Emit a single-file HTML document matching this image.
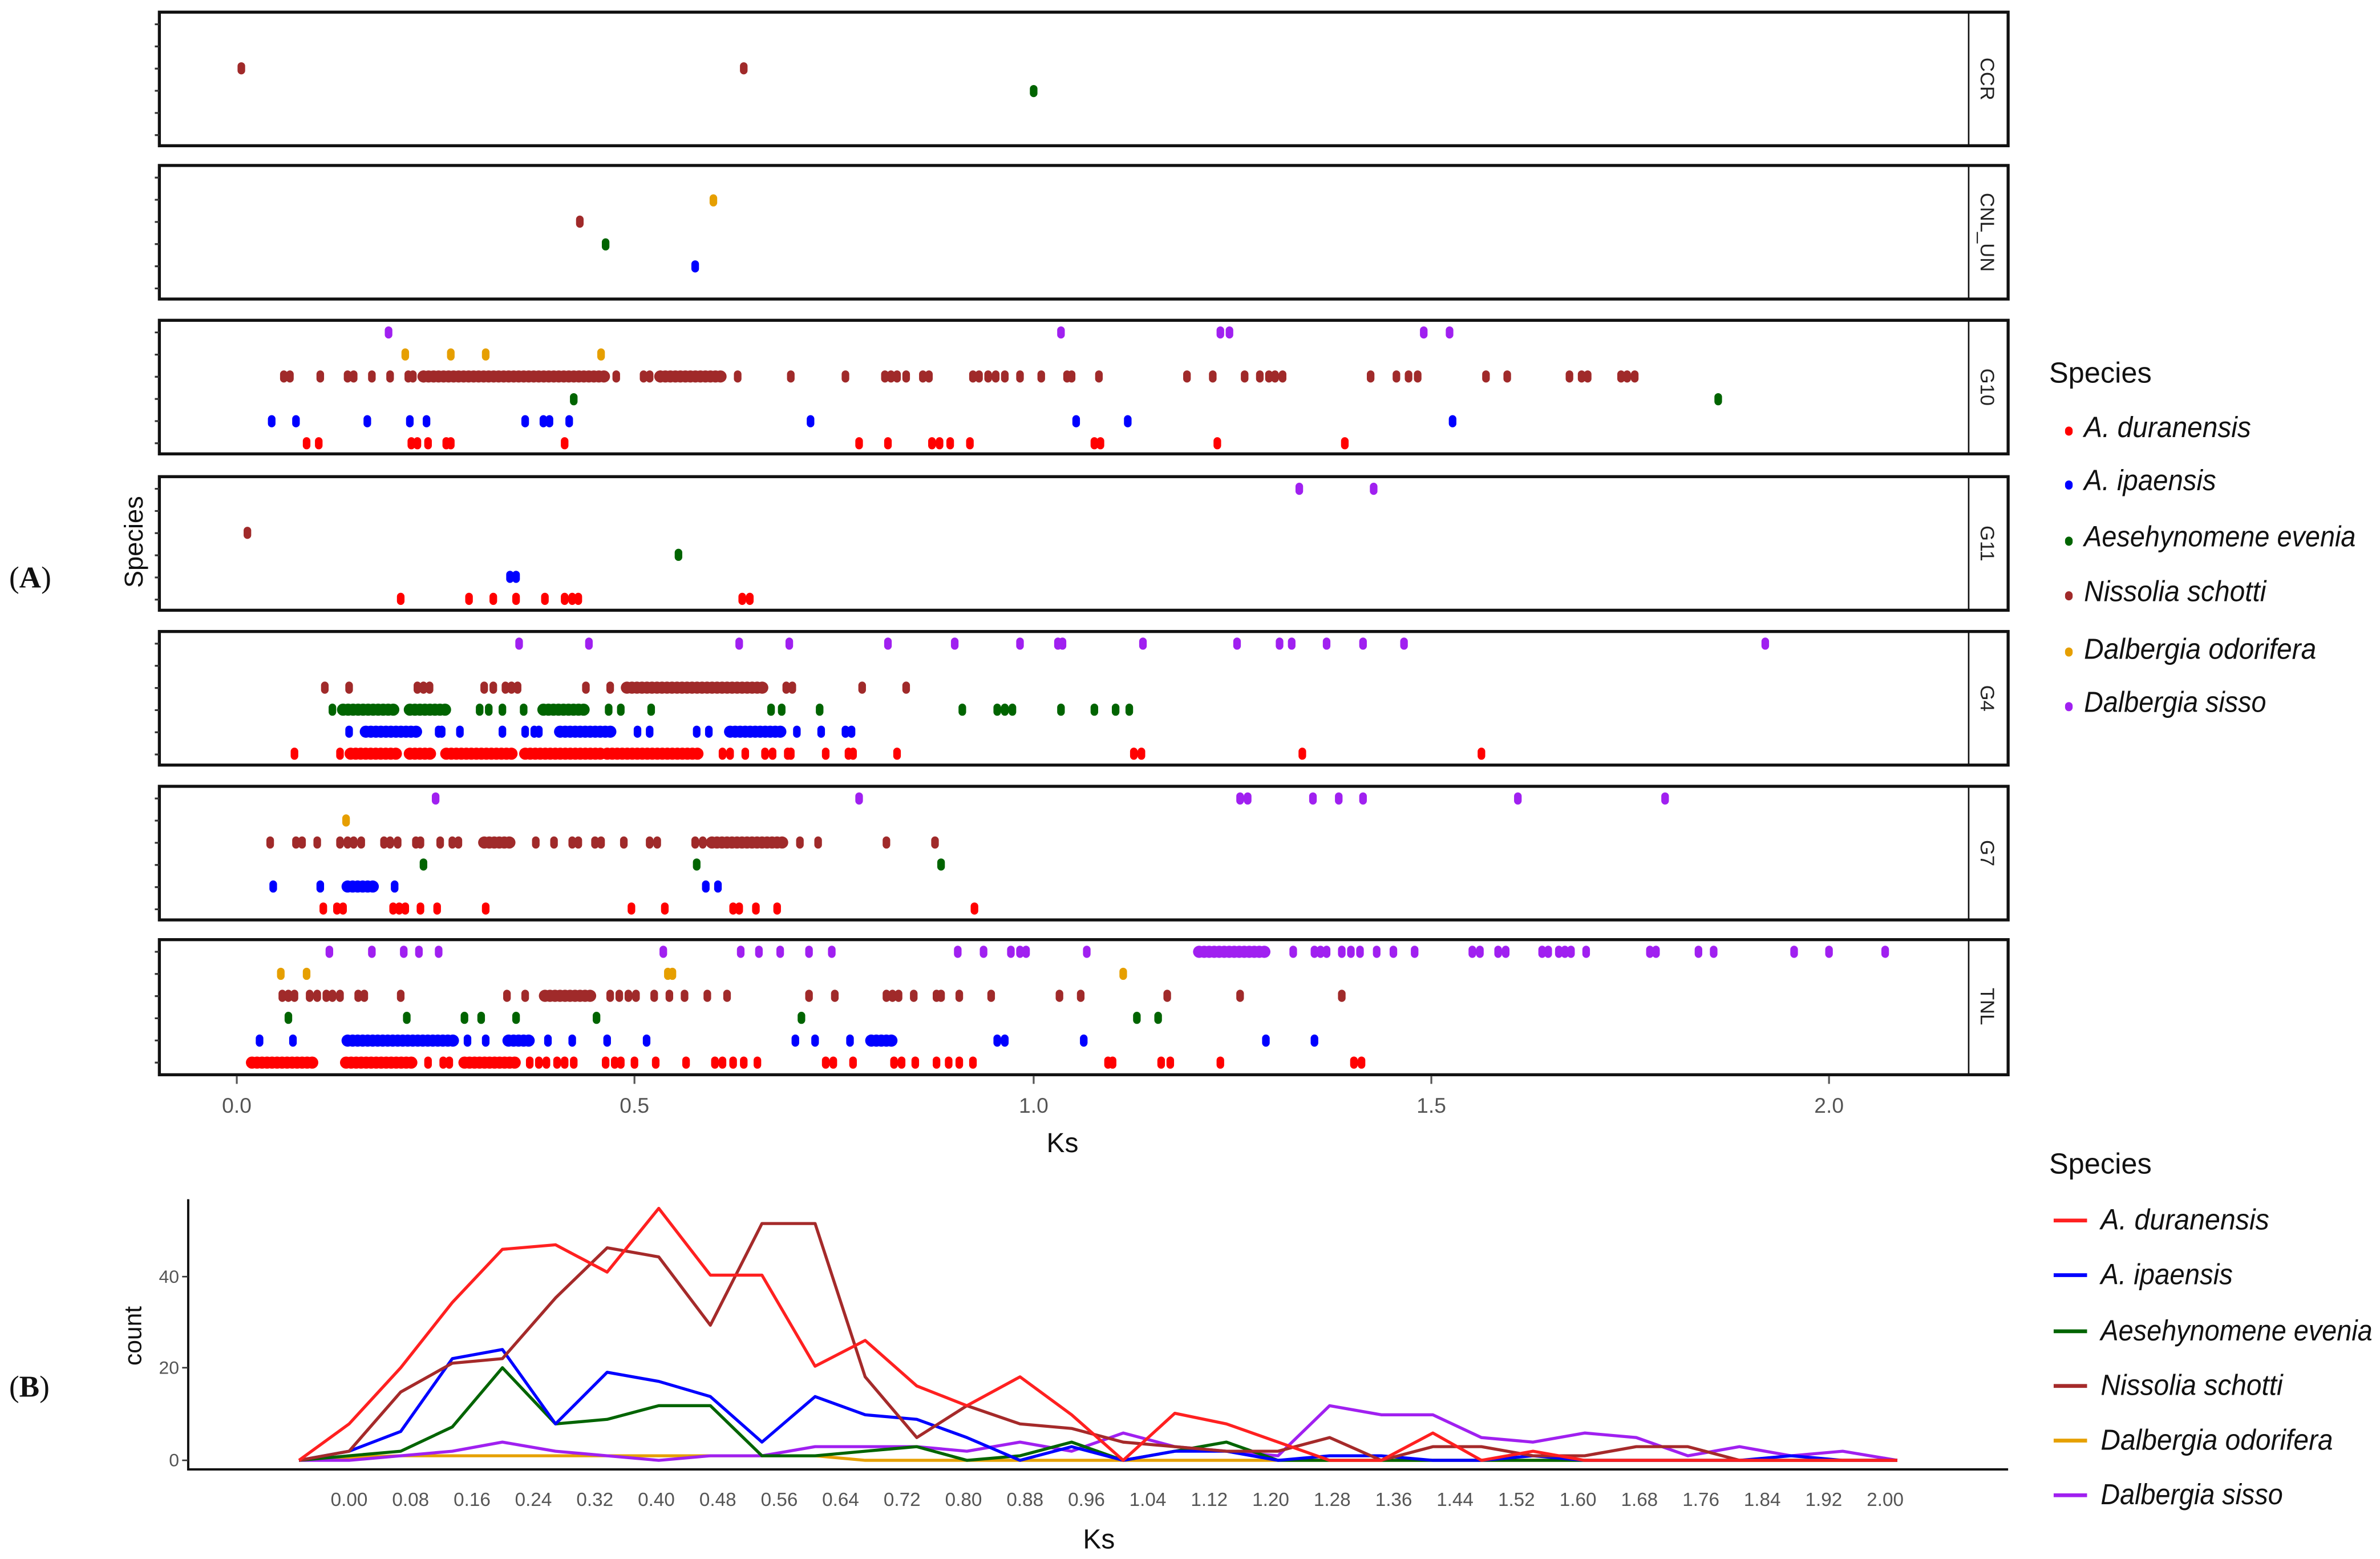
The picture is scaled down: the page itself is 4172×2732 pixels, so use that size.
<!DOCTYPE html>
<html><head><meta charset="utf-8"><style>
html,body{margin:0;padding:0;background:#fff;}
svg{display:block;}
text{font-family:"Liberation Sans",sans-serif;}
</style></head><body>
<svg width="4172" height="2732" viewBox="0 0 1568 1027" preserveAspectRatio="none" xmlns="http://www.w3.org/2000/svg">
<rect width="1568" height="1027" fill="#fff"/>
<g fill="none" stroke="#111" stroke-width="2">
<rect x="105" y="8" width="1218" height="88"/>
<rect x="105" y="109" width="1218" height="88"/>
<rect x="105" y="211" width="1218" height="88"/>
<rect x="105" y="314" width="1218" height="88"/>
<rect x="105" y="416" width="1218" height="88"/>
<rect x="105" y="518" width="1218" height="88"/>
<rect x="105" y="619" width="1218" height="89"/>
</g>
<g stroke="#111" stroke-width="1">
<path d="M1297 8v88M1297 109v88M1297 211v88M1297 314v88M1297 416v88M1297 518v88M1297 619v89"/>
</g>
<g stroke="#333" stroke-width="1.2">
<path d="M102 16h3M102 30.6h3M102 45.2h3M102 59.8h3M102 74.4h3M102 89h3
M102 117h3M102 131.6h3M102 146.2h3M102 160.8h3M102 175.4h3M102 190h3
M102 219h3M102 233.6h3M102 248.2h3M102 262.8h3M102 277.4h3M102 292h3
M102 322h3M102 336.6h3M102 351.2h3M102 365.8h3M102 380.4h3M102 395h3
M102 424h3M102 438.6h3M102 453.2h3M102 467.8h3M102 482.4h3M102 497h3
M102 526h3M102 540.6h3M102 555.2h3M102 569.8h3M102 584.4h3M102 599h3
M102 627h3M102 641.6h3M102 656.2h3M102 670.8h3M102 685.4h3M102 700h3"/>
<path d="M156 709v5M418 709v5M681 709v5M943 709v5M1205 709v5" stroke="#555"/>
</g>
<g font-size="13" fill="#222" text-anchor="middle">
<text transform="translate(1305,52) rotate(90)">CCR</text>
<text transform="translate(1305,153) rotate(90)">CNL_UN</text>
<text transform="translate(1305,255) rotate(90)">G10</text>
<text transform="translate(1305,358) rotate(90)">G11</text>
<text transform="translate(1305,460) rotate(90)">G4</text>
<text transform="translate(1305,562) rotate(90)">G7</text>
<text transform="translate(1305,663) rotate(90)">TNL</text>
</g>
<g font-size="14" fill="#555" text-anchor="middle">
<text x="156" y="733">0.0</text><text x="418" y="733">0.5</text><text x="681" y="733">1.0</text><text x="943" y="733">1.5</text><text x="1205" y="733">2.0</text>
</g>
<text x="700" y="759" font-size="18" fill="#111" text-anchor="middle">Ks</text>
<text transform="translate(94,357) rotate(-90)" font-size="17" fill="#111" text-anchor="middle">Species</text>
<text x="6" y="387" font-size="20" fill="#111" style="font-family:'Liberation Serif',serif">(<tspan font-weight="bold">A</tspan>)</text>
<text x="6" y="920" font-size="20" fill="#111" style="font-family:'Liberation Serif',serif">(<tspan font-weight="bold">B</tspan>)</text>

<!-- dots -->
<g stroke-linecap="round" stroke-width="5" fill="none">
<path stroke="#a02a2a" d="M159 43.5v3M490 43.5v3"/>
<path stroke="#006400" d="M681 58.5v3"/>
<path stroke="#e69f00" d="M470 130.5v3"/>
<path stroke="#a02a2a" d="M382 144.5v3"/>
<path stroke="#006400" d="M399 159.5v3"/>
<path stroke="#0000ff" d="M458 174v3"/>
<path stroke="#a020f0" d="M256 217.5v3M699 217.5v3M804 217.5v3M810 217.5v3M938 217.5v3M955 217.5v3"/>
<path stroke="#e69f00" d="M267 232v3M297 232v3M320 232v3M396 232v3"/>
<path stroke="#a02a2a" d="M187 246.5v3M191 246.5v3M211 246.5v3M229 246.5v3M233 246.5v3M245 246.5v3M257 246.5v3M269 246.5v3M272 246.5v3M279 246.5v3M406 246.5v3M424 246.5v3M428 246.5v3M435 246.5v3M486 246.5v3M521 246.5v3M557 246.5v3M583 246.5v3M587 246.5v3M591 246.5v3M597 246.5v3M608 246.5v3M612 246.5v3M641 246.5v3M645 246.5v3M651 246.5v3M656 246.5v3M662 246.5v3M672 246.5v3M686 246.5v3M703 246.5v3M706 246.5v3M724 246.5v3M782 246.5v3M799 246.5v3M820 246.5v3M830 246.5v3M836 246.5v3M840 246.5v3M845 246.5v3M903 246.5v3M920 246.5v3M928 246.5v3M934 246.5v3M979 246.5v3M993 246.5v3M1034 246.5v3M1042 246.5v3M1046 246.5v3M1068 246.5v3M1072 246.5v3M1077 246.5v3"/>
<path stroke="#006400" d="M378 261.5v3M1132 261.5v3"/>
<path stroke="#0000ff" d="M179 276v3M195 276v3M242 276v3M270 276v3M281 276v3M346 276v3M358 276v3M362 276v3M375 276v3M534 276v3M709 276v3M743 276v3M957 276v3"/>
<path stroke="#ff0000" d="M202 290.5v3M210 290.5v3M271 290.5v3M275 290.5v3M282 290.5v3M294 290.5v3M297 290.5v3M372 290.5v3M566 290.5v3M585 290.5v3M614 290.5v3M619 290.5v3M626 290.5v3M639 290.5v3M721 290.5v3M725 290.5v3M802 290.5v3M886 290.5v3"/>
<path stroke="#a020f0" d="M856 320.5v3M905 320.5v3"/>
<path stroke="#a02a2a" d="M163 349.5v3"/>
<path stroke="#006400" d="M447 364v3"/>
<path stroke="#0000ff" d="M336 378.5v3M340 378.5v3"/>
<path stroke="#ff0000" d="M264 393v3M309 393v3M325 393v3M340 393v3M359 393v3M372 393v3M377 393v3M381 393v3M489 393v3M494 393v3"/>
<path stroke="#a020f0" d="M342 422.5v3M388 422.5v3M487 422.5v3M520 422.5v3M585 422.5v3M629 422.5v3M672 422.5v3M697 422.5v3M700 422.5v3M753 422.5v3M815 422.5v3M843 422.5v3M851 422.5v3M874 422.5v3M898 422.5v3M925 422.5v3M1163 422.5v3"/>
<path stroke="#a02a2a" d="M214 451.5v3M230 451.5v3M275 451.5v3M279 451.5v3M283 451.5v3M319 451.5v3M325 451.5v3M333 451.5v3M337 451.5v3M341 451.5v3M386 451.5v3M402 451.5v3M518 451.5v3M522 451.5v3M568 451.5v3M597 451.5v3"/>
<path stroke="#006400" d="M219 466v3M316 466v3M322 466v3M331 466v3M345 466v3M401 466v3M409 466v3M429 466v3M508 466v3M515 466v3M540 466v3M634 466v3M657 466v3M662 466v3M667 466v3M699 466v3M721 466v3M735 466v3M744 466v3"/>
<path stroke="#0000ff" d="M230 480.5v3M289 480.5v3M291 480.5v3M303 480.5v3M331 480.5v3M346 480.5v3M352 480.5v3M355 480.5v3M420 480.5v3M428 480.5v3M459 480.5v3M467 480.5v3M525 480.5v3M541 480.5v3M557 480.5v3M561 480.5v3"/>
<path stroke="#ff0000" d="M194 495v3M224 495v3M476 495v3M481 495v3M491 495v3M504 495v3M509 495v3M519 495v3M521 495v3M544 495v3M559 495v3M562 495v3M591 495v3M747 495v3M752 495v3M858 495v3M976 495v3"/>
<path stroke="#a020f0" d="M287 524.5v3M566 524.5v3M817 524.5v3M822 524.5v3M865 524.5v3M882 524.5v3M898 524.5v3M1000 524.5v3M1097 524.5v3"/>
<path stroke="#e69f00" d="M228 539v3"/>
<path stroke="#a02a2a" d="M178 553.5v3M195 553.5v3M199 553.5v3M209 553.5v3M224 553.5v3M229 553.5v3M233 553.5v3M238 553.5v3M253 553.5v3M257 553.5v3M262 553.5v3M274 553.5v3M277 553.5v3M290 553.5v3M298 553.5v3M302 553.5v3M353 553.5v3M365 553.5v3M377 553.5v3M381 553.5v3M392 553.5v3M396 553.5v3M411 553.5v3M428 553.5v3M433 553.5v3M458 553.5v3M463 553.5v3M527 553.5v3M539 553.5v3M584 553.5v3M616 553.5v3"/>
<path stroke="#006400" d="M279 568v3M459 568v3M620 568v3"/>
<path stroke="#0000ff" d="M180 582.5v3M211 582.5v3M260 582.5v3M465 582.5v3M473 582.5v3"/>
<path stroke="#ff0000" d="M213 597v3M222 597v3M226 597v3M259 597v3M263 597v3M267 597v3M277 597v3M288 597v3M320 597v3M416 597v3M438 597v3M483 597v3M487 597v3M498 597v3M512 597v3M642 597v3"/>
<path stroke="#a020f0" d="M217 625.5v3M245 625.5v3M266 625.5v3M276 625.5v3M289 625.5v3M437 625.5v3M488 625.5v3M500 625.5v3M514 625.5v3M533 625.5v3M548 625.5v3M631 625.5v3M648 625.5v3M666 625.5v3M672 625.5v3M676 625.5v3M716 625.5v3M852 625.5v3M866 625.5v3M870 625.5v3M874 625.5v3M884 625.5v3M890 625.5v3M896 625.5v3M907 625.5v3M918 625.5v3M932 625.5v3M970 625.5v3M975 625.5v3M987 625.5v3M992 625.5v3M1016 625.5v3M1020 625.5v3M1027 625.5v3M1031 625.5v3M1035 625.5v3M1045 625.5v3M1087 625.5v3M1091 625.5v3M1119 625.5v3M1129 625.5v3M1182 625.5v3M1205 625.5v3M1242 625.5v3"/>
<path stroke="#e69f00" d="M185 640v3M202 640v3M440 640v3M443 640v3M740 640v3"/>
<path stroke="#a02a2a" d="M186 654.5v3M190 654.5v3M194 654.5v3M204 654.5v3M209 654.5v3M215 654.5v3M219 654.5v3M224 654.5v3M236 654.5v3M240 654.5v3M264 654.5v3M334 654.5v3M346 654.5v3M402 654.5v3M408 654.5v3M414 654.5v3M419 654.5v3M431 654.5v3M441 654.5v3M451 654.5v3M466 654.5v3M479 654.5v3M533 654.5v3M550 654.5v3M584 654.5v3M588 654.5v3M592 654.5v3M602 654.5v3M617 654.5v3M620 654.5v3M632 654.5v3M653 654.5v3M698 654.5v3M712 654.5v3M769 654.5v3M817 654.5v3M884 654.5v3"/>
<path stroke="#006400" d="M190 669v3M268 669v3M306 669v3M317 669v3M340 669v3M393 669v3M528 669v3M749 669v3M763 669v3"/>
<path stroke="#0000ff" d="M171 684v3M193 684v3M308 684v3M320 684v3M361 684v3M377 684v3M400 684v3M426 684v3M524 684v3M537 684v3M560 684v3M657 684v3M662 684v3M714 684v3M834 684v3M866 684v3"/>
<path stroke="#ff0000" d="M282 698.5v3M292 698.5v3M296 698.5v3M349 698.5v3M355 698.5v3M360 698.5v3M367 698.5v3M372 698.5v3M378 698.5v3M399 698.5v3M405 698.5v3M409 698.5v3M418 698.5v3M432 698.5v3M452 698.5v3M471 698.5v3M476 698.5v3M483 698.5v3M490 698.5v3M499 698.5v3M544 698.5v3M549 698.5v3M562 698.5v3M589 698.5v3M594 698.5v3M603 698.5v3M617 698.5v3M625 698.5v3M632 698.5v3M641 698.5v3M730 698.5v3M733 698.5v3M765 698.5v3M771 698.5v3M804 698.5v3M892 698.5v3M897 698.5v3"/>
</g>
<!-- dense clusters -->
<g stroke-linecap="round" stroke-width="8" fill="none" stroke-dasharray="0.1 3.2">
<path stroke="#a02a2a" d="M279 248h121M435 248h40M413 453h92M319 555h17M469 555h49M359 656h30"/>
<path stroke="#006400" d="M226 467.5h36M270 467.5h24M358 467.5h28"/>
<path stroke="#0000ff" d="M241 482h35M369 482h36M481 482h36M229 584h17M229 685.5h71M335 685.5h15M574 685.5h16"/>
<path stroke="#ff0000" d="M231 496.5h31M270 496.5h14M294 496.5h46M346 496.5h50M400 496.5h60M166 700h40M228 700h44M306 700h34"/>
<path stroke="#a020f0" d="M790 627h44"/>
</g>

<!-- top legend -->
<text x="1350" y="252" font-size="19" fill="#111">Species</text>
<g stroke-linecap="round" stroke-width="5" fill="none">
<path stroke="#ff0000" d="M1363 283.5v1"/>
<path stroke="#0000ff" d="M1363 319v1"/>
<path stroke="#006400" d="M1363 356v1"/>
<path stroke="#a02a2a" d="M1363 392v1"/>
<path stroke="#e69f00" d="M1363 429v1"/>
<path stroke="#a020f0" d="M1363 465v1"/>
</g>
<g font-size="19" font-style="italic" fill="#111">
<text x="1373" y="288" textLength="110" lengthAdjust="spacingAndGlyphs">A. duranensis</text>
<text x="1373" y="323" textLength="87" lengthAdjust="spacingAndGlyphs">A. ipaensis</text>
<text x="1373" y="360" textLength="179" lengthAdjust="spacingAndGlyphs">Aesehynomene evenia</text>
<text x="1373" y="396" textLength="120" lengthAdjust="spacingAndGlyphs">Nissolia schotti</text>
<text x="1373" y="434" textLength="153" lengthAdjust="spacingAndGlyphs">Dalbergia odorifera</text>
<text x="1373" y="469" textLength="120" lengthAdjust="spacingAndGlyphs">Dalbergia sisso</text>
</g>

<!-- bottom chart -->
<g stroke="#111" stroke-width="1.5" fill="none">
<path d="M124 790V968H1323"/>
</g>
<g stroke="#333" stroke-width="1">
<path d="M120 962h4M120 901h4M120 841h4"/>
</g>
<g font-size="12" fill="#555" text-anchor="end">
<text x="118" y="966">0</text><text x="118" y="905">20</text><text x="118" y="845">40</text>
</g>
<text transform="translate(93,880) rotate(-90)" font-size="16" fill="#111" text-anchor="middle">count</text>
<g font-size="12.5" fill="#555" text-anchor="middle">
<text x="230" y="992">0.00</text><text x="270.5" y="992">0.08</text><text x="311" y="992">0.16</text><text x="351.4" y="992">0.24</text><text x="391.9" y="992">0.32</text><text x="432.4" y="992">0.40</text><text x="472.9" y="992">0.48</text><text x="513.4" y="992">0.56</text><text x="553.8" y="992">0.64</text><text x="594.3" y="992">0.72</text><text x="634.8" y="992">0.80</text><text x="675.3" y="992">0.88</text><text x="715.8" y="992">0.96</text><text x="756.2" y="992">1.04</text><text x="796.7" y="992">1.12</text><text x="837.2" y="992">1.20</text><text x="877.7" y="992">1.28</text><text x="918.2" y="992">1.36</text><text x="958.6" y="992">1.44</text><text x="999.1" y="992">1.52</text><text x="1039.6" y="992">1.60</text><text x="1080.1" y="992">1.68</text><text x="1120.6" y="992">1.76</text><text x="1161" y="992">1.84</text><text x="1201.5" y="992">1.92</text><text x="1242" y="992">2.00</text>
</g>
<text x="724" y="1020" font-size="18" fill="#111" text-anchor="middle">Ks</text>
<g fill="none" stroke-width="2" stroke-linejoin="round">
<polyline stroke="#e6a000" points="197,962 230,960 264,959 298,959 331,959 366,959 400,959 434,959 468,959 502,959 537,959 570,962 604,962 637,962 672,962 706,962 740,962 774,962 808,962 842,962 876,962 910,962 944,962 976,962 1010,962 1044,962 1078,962 1112,962 1146,962 1180,962 1214,962 1250,962"/>
<polyline stroke="#a020f0" points="197,962 230,962 264,959 298,956 331,950 366,956 400,959 434,962 468,959 502,959 537,953 570,953 604,953 637,956 672,950 706,956 740,944 774,953 808,956 842,959 876,926 910,932 944,932 976,947 1010,950 1044,944 1078,947 1112,959 1146,953 1180,959 1214,956 1250,962"/>
<polyline stroke="#006400" points="197,962 230,959 264,956 298,940 331,901 366,938 400,935 434,926 468,926 502,959 537,959 570,956 604,953 637,962 672,959 706,950 740,962 774,956 808,950 842,962 876,962 910,962 944,962 976,962 1010,962 1044,962 1078,962 1112,962 1146,962 1180,962 1214,962 1250,962"/>
<polyline stroke="#0000ff" points="197,962 230,956 264,943 298,895 331,889 366,938 400,904 434,910 468,920 502,950 537,920 570,932 604,935 637,947 672,962 706,953 740,962 774,956 808,956 842,962 876,959 910,959 944,962 976,962 1010,959 1044,962 1078,962 1112,962 1146,962 1180,959 1214,962 1250,962"/>
<polyline stroke="#a52a2a" points="197,962 230,956 264,917 298,898 331,895 366,855 400,822 434,828 468,873 502,806 537,806 570,907 604,947 637,926 672,938 706,941 740,950 774,953 808,956 842,956 876,947 910,962 944,953 976,953 1010,959 1044,959 1078,953 1112,953 1146,962 1180,962 1214,962 1250,962"/>
<polyline stroke="#ff2020" points="197,962 230,938 264,901 298,858 331,823 366,820 400,838 434,796 468,840 502,840 537,900 570,883 604,913 637,926 672,907 706,932 740,962 774,931 808,938 842,950 876,962 910,962 944,944 976,962 1010,956 1044,962 1078,962 1112,962 1146,962 1180,962 1214,962 1250,962"/>
</g>

<!-- bottom legend -->
<text x="1350" y="773" font-size="19" fill="#111">Species</text>
<g stroke-width="2.5">
<path stroke="#ff2020" d="M1353 804h22"/>
<path stroke="#0000ff" d="M1353 840h22"/>
<path stroke="#006400" d="M1353 877h22"/>
<path stroke="#a52a2a" d="M1353 913h22"/>
<path stroke="#e6a000" d="M1353 949h22"/>
<path stroke="#a020f0" d="M1353 985h22"/>
</g>
<g font-size="19" font-style="italic" fill="#111">
<text x="1384" y="810" textLength="111" lengthAdjust="spacingAndGlyphs">A. duranensis</text>
<text x="1384" y="846" textLength="87" lengthAdjust="spacingAndGlyphs">A. ipaensis</text>
<text x="1384" y="883" textLength="179" lengthAdjust="spacingAndGlyphs">Aesehynomene evenia</text>
<text x="1384" y="919" textLength="120" lengthAdjust="spacingAndGlyphs">Nissolia schotti</text>
<text x="1384" y="955" textLength="153" lengthAdjust="spacingAndGlyphs">Dalbergia odorifera</text>
<text x="1384" y="991" textLength="120" lengthAdjust="spacingAndGlyphs">Dalbergia sisso</text>
</g>
</svg>
</body></html>
